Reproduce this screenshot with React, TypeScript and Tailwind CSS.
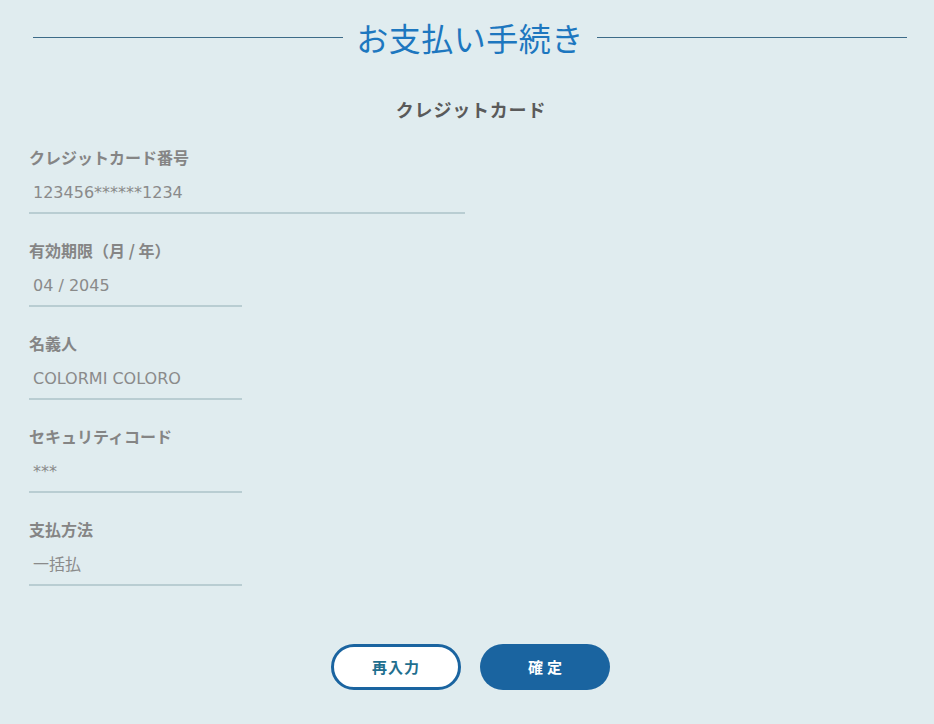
import React from 'react';

interface Field {
  label: string;
  value: string;
  wide?: boolean;
}

const fields: Field[] = [
  { label: 'クレジットカード番号', value: '123456******1234', wide: true },
  { label: '有効期限（月 / 年）', value: '04 / 2045' },
  { label: '名義人', value: 'COLORMI COLORO' },
  { label: 'セキュリティコード', value: '***' },
  { label: '支払方法', value: '一括払' },
];

const font = "font-['Noto_Sans_CJK_JP','Noto_Sans',sans-serif]";

export default function App() {
  return (
    <div className={`min-h-[724px] w-full bg-[#e0ecef] ${font}`}>
      {/* Title */}
      <div className="flex items-center gap-[13px] pl-[33px] pr-[27px] pt-[14px]">
        <div className="h-px flex-1 bg-[#3d6b88]" />
        <h1 className="text-[32px] leading-[46px] font-normal text-[#1d77bf] tracking-[0.5px]">お支払い手続き</h1>
        <div className="h-px flex-1 bg-[#3d6b88]" />
      </div>

      <h2 className="mt-[36px] pl-[8px] text-center text-[18px] leading-[26px] font-bold text-[#5a5a5a] tracking-[0.8px]">
        クレジットカード
      </h2>

      <div className="mt-[24px] flex flex-col gap-[25px] pl-[29px]">
        {fields.map((f) => (
          <div key={f.label} className="flex flex-col">
            <label className="text-[16px] leading-[22px] font-bold text-[#858585]">{f.label}</label>
            <div
              className={`mt-[14px] border-b-2 border-[#b9cdd2] pb-[8px] pl-[4px] font-['DejaVu_Sans','Noto_Sans_CJK_JP',sans-serif] text-[16px] leading-[22px] text-[#8a8a8a] ${
                f.wide ? 'w-[436px]' : 'w-[213px]'
              }`}
            >
              {f.value}
            </div>
          </div>
        ))}
      </div>

      <div className="mt-[58px] flex justify-center gap-[19px] pl-[7px]">
        <button className="h-[46px] w-[130px] rounded-full border-[3px] border-[#1a64a0] bg-white text-[15px] font-bold text-[#1f6f8f] tracking-[1px]">
          再入力
        </button>
        <button className="h-[46px] w-[130px] rounded-full bg-[#1a64a0] pl-[4px] text-[15px] font-bold text-white tracking-[4px]">
          確定
        </button>
      </div>
    </div>
  );
}
